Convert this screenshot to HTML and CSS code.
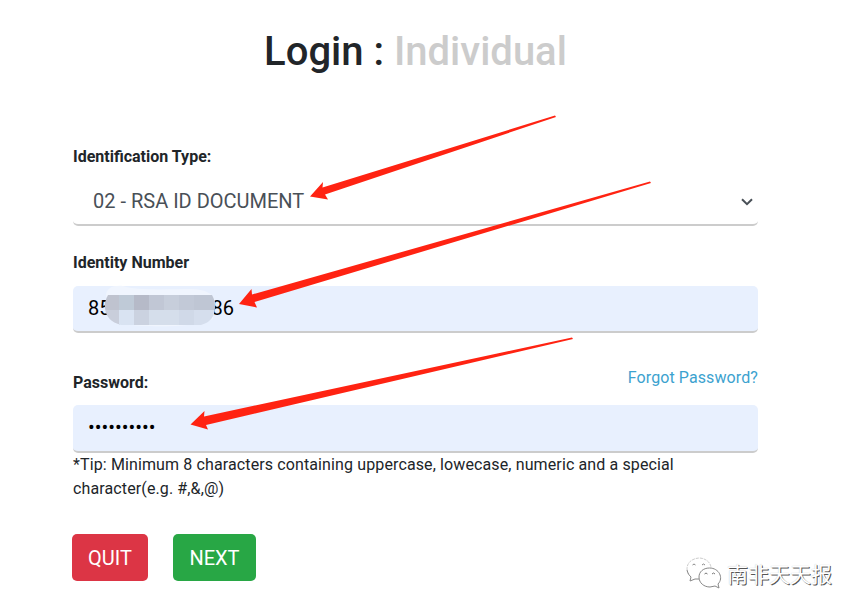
FILE: index.html
```html
<!DOCTYPE html>
<html lang="en">
<head>
  <meta charset="UTF-8">
  <meta name="viewport" content="width=device-width, initial-scale=1.0">
  <title>Login : Individual</title>
  <link rel="stylesheet" href="styles.css">
</head>
<body>
  <div class="container">
    <h1>Login : <span class="muted">Individual</span></h1>
    <form>
      <div class="form-group type-group">
        <label>Identification Type:</label>
        <div class="form-control select">
          <span>02 - RSA ID DOCUMENT</span>
          <svg class="chevron" width="12" height="8" viewBox="0 0 12 8"><path d="M1 1.200l5 5 5-5" fill="none" stroke="#495057" stroke-width="2"/></svg>
        </div>
      </div>
      <div class="form-group id-group">
        <label>Identity Number</label>
        <div class="form-control filled">
          <span>85</span><span class="hidden-digits"></span><span>86</span>
          <svg class="mosaic" width="114" height="42" viewBox="0 0 114 42">
            <path d="M3 11C3 3 10 0 20 1C34 6 68 4 88 4C102 4 112 9 112 18L110 34C90 44 38 41 26 40Z" fill="#f0f5fe"/>
            <clipPath id="pill"><path d="M5 10H109Q112 15 112 22Q112 36 98 40H18Q3 36 2 23Q1 17 5 10Z"/></clipPath>
            <g clip-path="url(#pill)">
              <rect x="0" y="10" width="17" height="15" fill="#bfc3cf"/>
              <rect x="16" y="10" width="15" height="15" fill="#bfcad7"/>
              <rect x="31" y="10" width="15" height="15" fill="#b6bac8"/>
              <rect x="46" y="10" width="15" height="15" fill="#c1c7d5"/>
              <rect x="61" y="10" width="15" height="15" fill="#c7cedb"/>
              <rect x="76" y="10" width="15" height="15" fill="#c2c9d7"/>
              <rect x="91" y="10" width="22" height="15" fill="#bfc6d4"/>
              <rect x="0" y="25" width="17" height="15" fill="#c9cedb"/>
              <rect x="16" y="25" width="15" height="15" fill="#d9e3f2"/>
              <rect x="31" y="25" width="15" height="15" fill="#cbd2e0"/>
              <rect x="46" y="25" width="30" height="15" fill="#d5deeb"/>
              <rect x="76" y="25" width="15" height="15" fill="#d0d9e8"/>
              <rect x="91" y="25" width="22" height="15" fill="#d5deed"/>
            </g>
          </svg>
        </div>
      </div>
      <div class="form-group password-group">
        <div class="label-row">
          <label>Password:</label>
          <a class="forgot">Forgot Password?</a>
        </div>
        <div class="form-control filled">
          <span class="dots">••••••••••</span>
        </div>
        <p class="tip">*Tip: Minimum 8 characters containing uppercase, lowecase, numeric and a special character(e.g. #,&amp;,@)</p>
      </div>
      <div class="buttons">
        <button type="button" class="btn btn-danger">QUIT</button>
        <button type="button" class="btn btn-success">NEXT</button>
      </div>
    </form>
  </div>

  <!-- Arrows pointing at the three fields -->
  <svg class="arrows" width="860" height="612" viewBox="0 0 860 612" fill="#ff2312">
    <path d="M310 196.500L323 182L322.500 187.500L555 115.500L556 117L325 194.500L328 199.500Z"/>
    <path d="M239 304L251.500 289L252 294.500L650 181.500L651 183L254.500 302L257 307.500Z"/>
    <path d="M190.500 424.500L204.500 411L204 416.500L572 337.500L573 339L206 425L208 429.500Z"/>
  </svg>

  <div class="watermark">
    <svg width="36" height="32" viewBox="0 0 36 32" fill="#fff" stroke-width="1">
      <path d="M5 20C-2 14 0 2 13 1C20 1 25 6 25 11" stroke="#ccc" stroke-dasharray="3 1" fill="none"/>
      <path d="M1 13C2 17 3 18 5 20L4 24L9 22L13 22" stroke="#888" fill="none"/>
      <path d="M6.500 8Q8 6 9.500 8M16 8Q17.500 6 19 8" fill="none" stroke="#888"/>
      <path d="M23.500 11C17 11 13 15 13 20C13 26 18 30 24 30L29 29L33 31L32 27C38 21 33 11 23.500 11Z" stroke="#888"/>
      <path d="M18.500 17Q20 15 21.500 17M26 17Q27.500 15 29 17" fill="none" stroke="#777"/>
    </svg>
    <span>南非天天报</span>
  </div>
</body>
</html>
```

FILE: styles.css
```css
* {
  box-sizing: border-box;
}
body {
  margin: 0;
  height: 612px;
  overflow: hidden;
  background: #fff;
  color: #212529;
  font-family: Roboto, sans-serif;
  font-size: 16px;
  line-height: 24px;
}
.container {
  width: 685px;
  margin-left: 73px;
  padding-top: 28px;
}
h1 {
  margin: 0;
  font-size: 40px;
  line-height: 48px;
  font-weight: 500;
  text-align: center;
}
.muted {
  color: #ccc;
}
form {
  margin-top: 69px;
}
label {
  display: block;
  font-weight: 700;
}
.form-control {
  position: relative;
  display: flex;
  align-items: center;
  height: 47px;
  padding: 0 15px 1px;
  border-bottom: 2px solid #ccc;
  border-radius: 5px;
  font-size: 20px;
}
.select {
  justify-content: space-between;
  margin-top: 10px;
  padding: 0 5px 2px 20px;
  color: #495057;
}
.chevron {
  display: block;
  margin-top: 3px;
}
.filled {
  background: #e8f0fe;
  color: #000;
}
.id-group {
  margin-top: 25px;
}
.id-group .form-control {
  margin-top: 11px;
}
.hidden-digits {
  width: 101px;
}
/* pixelated patch over the middle digits */
.mosaic {
  position: absolute;
  left: 30px;
  top: -1px;
}
.password-group {
  margin-top: 33px;
}
.label-row {
  display: flex;
  justify-content: space-between;
  height: 39px;
}
.label-row label {
  padding-top: 5px;
}
.forgot {
  color: #3ca2cf;
  letter-spacing: 0.1px;
}
.password-group .form-control {
  height: 48px;
  padding-bottom: 2px;
}
.dots {
  font-size: 20px;
}
.tip {
  margin: 0;
  letter-spacing: 0.12px;
}
.buttons {
  display: flex;
  gap: 25px;
  margin: 33px 0 0 -1px;
}
.btn {
  height: 47px;
  padding: 0;
  border: 0;
  border-radius: 5px;
  color: #fff;
  font-family: inherit;
  font-size: 20px;
}
.btn-danger {
  width: 76px;
  background: #dc3545;
}
.btn-success {
  width: 83px;
  background: #28a745;
}
.arrows {
  position: absolute;
  left: 0;
  top: 0;
}
.watermark {
  position: absolute;
  left: 686px;
  top: 557px;
  display: flex;
  align-items: center;
  gap: 5px;
  color: #fff;
  font-family: "Noto Sans CJK SC", sans-serif;
  font-size: 21px;
  line-height: 32px;
  text-shadow: 1px 1px 0 #555, 0 0 1px #bbb;
}
```
